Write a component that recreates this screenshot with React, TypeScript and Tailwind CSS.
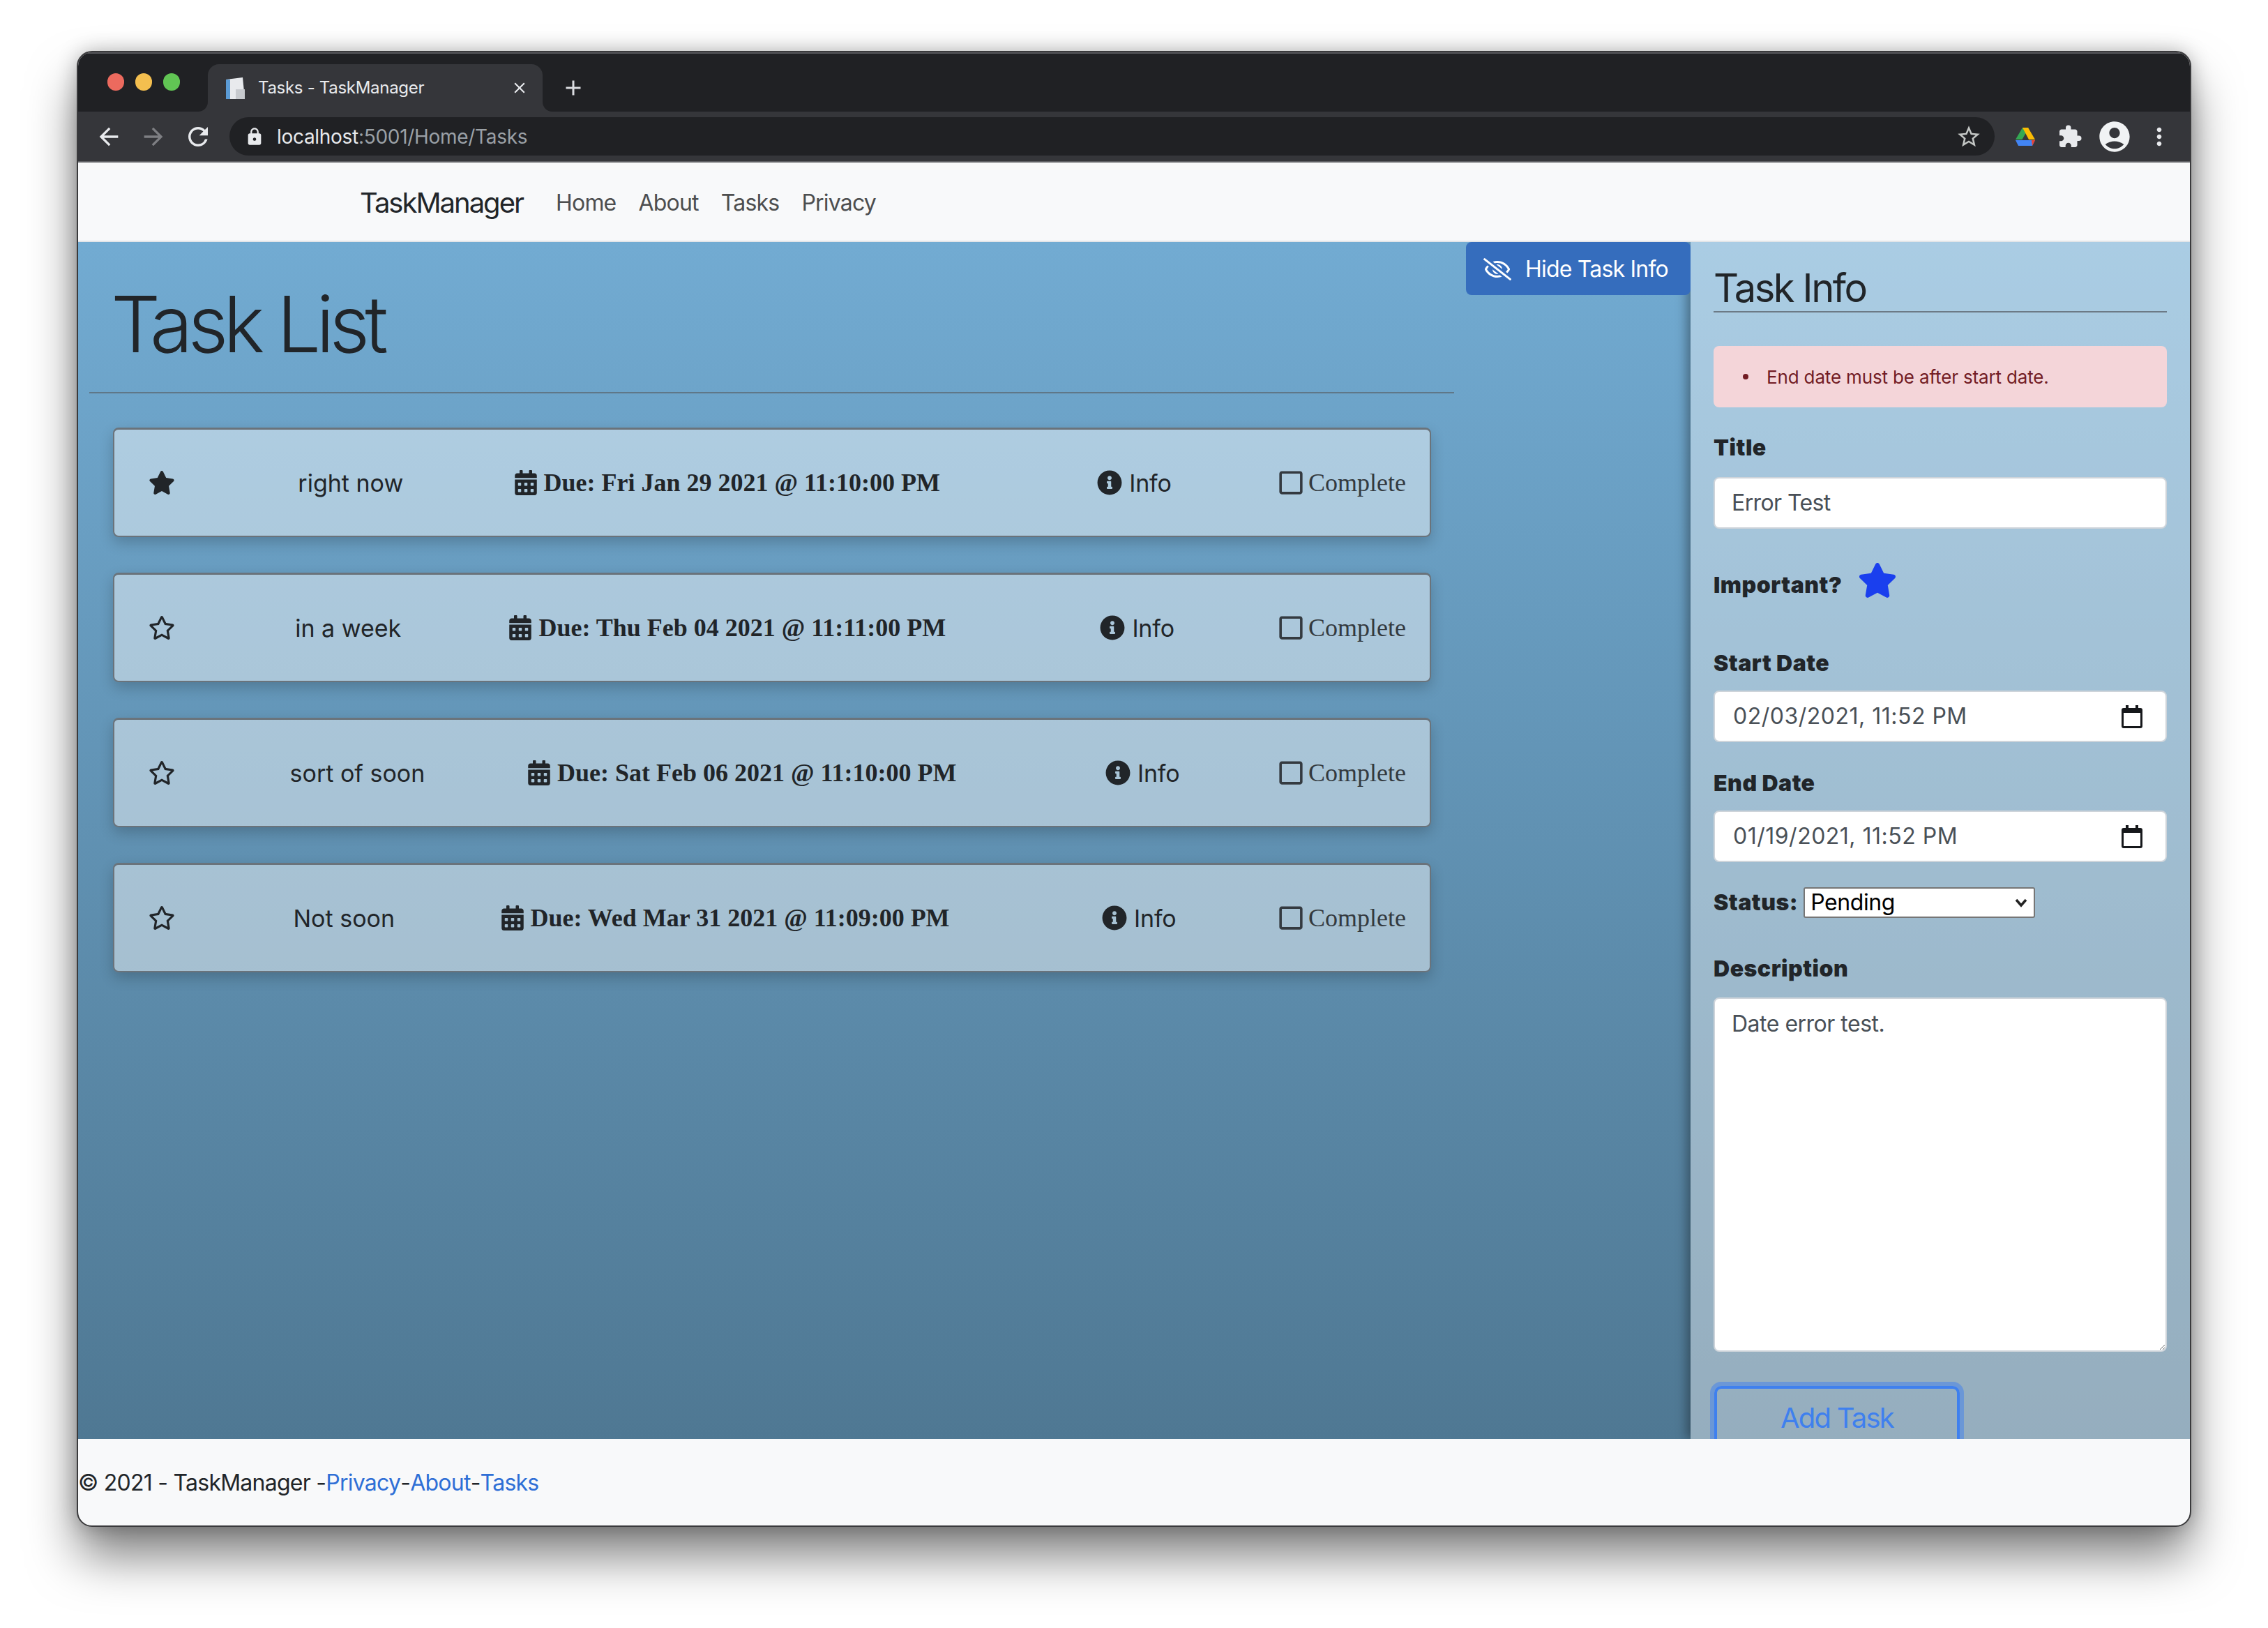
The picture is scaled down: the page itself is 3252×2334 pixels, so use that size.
import { FaCalendarAlt, FaInfoCircle, FaRegEyeSlash, FaRegSquare, FaRegStar, FaStar } from "react-icons/fa";
import { MdAccountCircle, MdArrowBack, MdArrowForward, MdExtension, MdLock, MdMoreVert, MdRefresh, MdStarBorder, MdAdd, MdClose } from "react-icons/md";

const tasks = [
  { title: "right now", due: "Due: Fri Jan 29 2021 @ 11:10:00 PM", important: true },
  { title: "in a week", due: "Due: Thu Feb 04 2021 @ 11:11:00 PM", important: false },
  { title: "sort of soon", due: "Due: Sat Feb 06 2021 @ 11:10:00 PM", important: false },
  { title: "Not soon", due: "Due: Wed Mar 31 2021 @ 11:09:00 PM", important: false },
];

function DriveLogo() {
  return (
    <svg width="30" height="28" viewBox="0 0 30 28">
      <path d="M10 1h9l-9.5 17H0z" fill="#34a853" transform="translate(1 0)" />
      <path d="M11 1h8l10 17h-9z" fill="#fbbc04" />
      <path d="M1 19h28l-4 8H5z" fill="#4285f4" />
      <path d="M24 19h5l-4 8z" fill="#ea4335" />
    </svg>
  );
}

function Favicon() {
  return (
    <svg width="33" height="33" viewBox="0 0 33 33">
      <path d="M3 4l24-3 3 31H3z" fill="#e8eaed" />
      <path d="M3 4h6v28H3z" fill="#5b9bd5" />
      <path d="M17 18h13v14H17z" fill="#c7cace" />
    </svg>
  );
}

function CalendarGlyph() {
  return (
    <svg width="30" height="33" viewBox="0 0 30 33">
      <path d="M6 0h4v4h10V0h4v4h3a3 3 0 0 1 3 3v23a3 3 0 0 1-3 3H3a3 3 0 0 1-3-3V7a3 3 0 0 1 3-3h3z" fill="#16181b" />
      <rect x="3" y="11" width="24" height="19" fill="#fff" />
    </svg>
  );
}

function BrowserChrome() {
  return (
    <>
      <div className="flex h-[85px] shrink-0 items-end border-t-2 border-[#55565a] bg-[#202124] pl-[42px]">
        <div className="flex h-[83px] items-center gap-[16px] pb-[2px]">
          <span className="h-[25px] w-[24px] rounded-full bg-[#ec6a5e]" />
          <span className="h-[25px] w-[24px] rounded-full bg-[#f4bf4f]" />
          <span className="h-[25px] w-[24px] rounded-full bg-[#61c554]" />
        </div>
        <div className="relative ml-[40px] flex h-[68px] w-[480px] items-center rounded-t-[16px] bg-[#35363a] pl-[23px] pr-[20px]">
          <span className="absolute bottom-0 left-[-14px] h-[14px] w-[14px] bg-[#35363a]">
            <span className="block h-full w-full rounded-br-[14px] bg-[#202124]" />
          </span>
          <span className="absolute bottom-0 right-[-14px] h-[14px] w-[14px] bg-[#35363a]">
            <span className="block h-full w-full rounded-bl-[14px] bg-[#202124]" />
          </span>
          <Favicon />
          <span className="ml-[16px] flex-1 text-[24px] tracking-[-0.3px] text-[#e8eaed]">Tasks - TaskManager</span>
          <MdClose className="text-[26px] text-[#e8eaed]" />
        </div>
        <div className="ml-[26px] flex h-[68px] items-center">
          <MdAdd className="text-[36px] text-[#dadce0]" />
        </div>
      </div>
      <div className="flex h-[73px] shrink-0 items-center border-b-2 border-[#5f6064] bg-[#35363a] pl-[12px]">
        <div className="flex w-[64px] justify-center"><MdArrowBack className="text-[40px] text-[#e8eaed]" /></div>
        <div className="flex w-[64px] justify-center"><MdArrowForward className="text-[40px] text-[#7e7f83]" /></div>
        <div className="flex w-[64px] justify-center"><MdRefresh className="text-[42px] text-[#e8eaed]" /></div>
        <div className="ml-[13px] flex h-[55px] w-[2531px] items-center rounded-full bg-[#202124] pl-[22px] pr-[18px]">
          <MdLock className="text-[28px] text-[#e8eaed]" />
          <span className="ml-[18px] flex-1 text-[28px] tracking-[-0.3px] text-[#9aa0a6]"><span className="text-[#e8eaed]">localhost</span>:5001/Home/Tasks</span>
          <MdStarBorder className="text-[38px] text-[#c4c7c5]" />
        </div>
        <div className="ml-[12px] flex w-[64px] justify-center"><DriveLogo /></div>
        <div className="flex w-[64px] justify-center"><MdExtension className="text-[36px] text-[#e8eaed]" /></div>
        <div className="flex w-[64px] justify-center"><MdAccountCircle className="text-[52px] text-[#f1f3f4]" /></div>
        <div className="flex w-[64px] justify-center"><MdMoreVert className="text-[40px] text-[#e8eaed]" /></div>
      </div>
    </>
  );
}

function Navbar() {
  return (
    <nav className="flex h-[114px] shrink-0 items-center border-b-2 border-[#e3e5e8] bg-[#f8f9fa] pl-[404px] pt-[3px]">
      <span className="text-[40px] tracking-[-2px] text-[#212529]">TaskManager</span>
      <div className="ml-[47px] flex gap-[32px] text-[32px] tracking-[-0.8px] text-[#4d4e4f]">
        <span>Home</span>
        <span>About</span>
        <span>Tasks</span>
        <span>Privacy</span>
      </div>
    </nav>
  );
}

function TaskRow({ title, due, important }: { title: string; due: string; important: boolean }) {
  return (
    <div className="flex h-[157px] items-center justify-between rounded-[8px] border-2 border-t-[3px] border-[#6a737b] bg-white/45 pl-[49px] pr-[34px] text-[#212529] shadow-[0_8px_20px_rgba(0,0,0,0.2)]">
      {important ? <FaStar className="w-[38px] text-[36px]" /> : <FaRegStar className="w-[38px] text-[36px]" />}
      <span className="ml-[24px] text-[34px]">{title}</span>
      <span className="ml-[5px] mr-[73px] flex items-center gap-[8px] font-['Liberation_Serif',serif] text-[36px] font-bold">
        <FaCalendarAlt className="text-[36px]" />
        {due}
      </span>
      <span className="flex items-center gap-[10px] text-[34px] tracking-[-0.2px]">
        <FaInfoCircle className="text-[36px]" />
        Info
      </span>
      <span className="flex items-center gap-[6px] font-['Liberation_Serif',serif] text-[36px] text-[#343a40]">
        <FaRegSquare className="text-[38px]" />
        Complete
      </span>
    </div>
  );
}

function FieldLabel({ children }: { children: string }) {
  return <div className="text-[32px] leading-[40px] font-black tracking-[0.5px] text-[#212529]">{children}</div>;
}

function DateField({ value }: { value: string }) {
  return (
    <div className="mt-[19px] flex h-[74px] items-center justify-between rounded-[8px] border-2 border-[#ced4da] bg-white pl-[26px] pr-[33px] text-[32px] tracking-[0.5px] text-[#495057]">
      <span>{value}</span>
      <CalendarGlyph />
    </div>
  );
}

function TaskInfoPanel() {
  return (
    <aside className="w-[716px] shrink-0 overflow-hidden bg-white/40 px-[33px] pt-[38px] shadow-[-6px_0_14px_rgba(0,0,0,0.35)]">
      <h3 className="border-b-2 border-[#6c7a86] pb-[4px] text-[56px] leading-[57px] tracking-[-2.4px] text-[#212529]">Task Info</h3>
      <div className="mt-[48px] flex h-[88px] items-center rounded-[8px] bg-[#f4d5d9] pl-[42px] text-[26px] tracking-[-0.15px] text-[#721c24]">
        <span className="h-[8px] w-[8px] rounded-full bg-[#721c24]" />
        <span className="ml-[26px]">End date must be after start date.</span>
      </div>
      <div className="mt-[38px]"><FieldLabel>Title</FieldLabel></div>
      <div className="mt-[22px] flex h-[74px] items-center rounded-[8px] border-2 border-[#ced4da] bg-white pl-[24px] text-[32px] tracking-[-0.6px] text-[#495057]">Error Test</div>
      <div className="mt-[56px] flex h-[50px] items-center">
        <FieldLabel>Important?</FieldLabel>
        <FaStar className="ml-[22px] mt-[-14px] text-[56px] text-[#1a3fee]" />
      </div>
      <div className="mt-[67px]"><FieldLabel>Start Date</FieldLabel></div>
      <DateField value="02/03/2021, 11:52 PM" />
      <div className="mt-[39px]"><FieldLabel>End Date</FieldLabel></div>
      <DateField value="01/19/2021, 11:52 PM" />
      <div className="mt-[36px] flex items-center">
        <FieldLabel>Status:</FieldLabel>
        <div className="ml-[8px] flex h-[44px] w-[332px] items-center justify-between rounded-[3px] border-2 border-[#767676] bg-white pl-[8px] pr-[8px] text-[32px] tracking-[-0.4px] text-black">
          <span>Pending</span>
          <svg width="20" height="14" viewBox="0 0 20 14"><path d="M3 3l7 8 7-8" fill="none" stroke="#222" strokeWidth="3.5" /></svg>
        </div>
      </div>
      <div className="mt-[53px]"><FieldLabel>Description</FieldLabel></div>
      <textarea
        readOnly
        defaultValue="Date error test."
        className="mt-[21px] block h-[508px] w-full rounded-[8px] border-2 border-[#ced4da] bg-white px-[24px] py-[12px] text-[32px] tracking-[-0.5px] text-[#495057]"
      />
      <div className="ml-[1px] mt-[49px] flex h-[160px] w-[352px] items-center justify-center rounded-[10px] border-4 border-[#3f80ee] pb-[68px] text-[40px] tracking-[-1.8px] text-[#3f80ee] shadow-[0_0_0_6px_rgba(63,128,238,0.5)]">
        Add Task
      </div>
    </aside>
  );
}

export default function App() {
  return (
    <div className="h-[2334px] w-[3252px] bg-white pl-[112px] pt-[75px] font-['Inter',sans-serif]">
      <div className="flex h-[2112px] w-[3028px] flex-col overflow-hidden rounded-[20px] outline-2 outline-[#3a3a3c] shadow-[0_44px_70px_rgba(0,0,0,0.5),0_0_30px_rgba(0,0,0,0.3)]">
        <BrowserChrome />
        <Navbar />
        <main className="relative flex h-[1716px] shrink-0 overflow-hidden bg-gradient-to-b from-[#72abd2] to-[#4f7893]">
          <section className="relative flex-1">
            <div className="absolute right-0 top-0 flex h-[76px] w-[322px] items-center rounded-[8px] bg-[#356dbd] pl-[25px] pt-[2px] text-[32px] tracking-[-0.8px] text-white">
              <FaRegEyeSlash className="text-[40px]" />
              <span className="ml-[20px]">Hide Task Info</span>
            </div>
            <div className="ml-[16px] w-[1957px] border-b-2 border-[#5f7788] pb-[31px] pl-[31px] pt-[50px] text-[112px] font-light leading-[134px] tracking-[-7px] text-[#212529]">Task List</div>
            <div className="ml-[50px] mt-[49px] flex w-[1890px] flex-col gap-[51px]">
              {tasks.map((t) => (
                <TaskRow key={t.title} {...t} />
              ))}
            </div>
          </section>
          <TaskInfoPanel />
        </main>
        <footer className="flex flex-1 items-center bg-[#f8f9fa] pt-[2px] text-[32px] tracking-[-0.75px] text-[#212529]">
          © 2021 - TaskManager -<span className="text-[#2f6fd6]">Privacy</span>-<span className="text-[#2f6fd6]">About</span>-<span className="text-[#2f6fd6]">Tasks</span>
        </footer>
      </div>
    </div>
  );
}
